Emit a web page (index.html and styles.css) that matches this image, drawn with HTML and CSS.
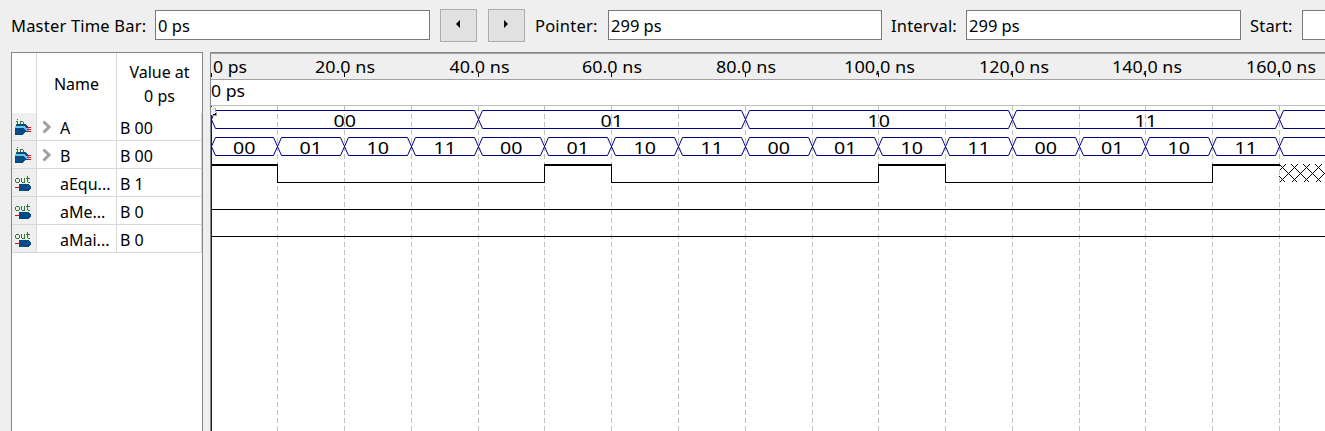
FILE: index.html
```
<!DOCTYPE html>
<html lang="en">
<head>
<meta charset="utf-8">
<title>Waveform Editor</title>
<link rel="stylesheet" href="styles.css">
</head>
<body>
<svg class="defs" width="0" height="0">
  <defs>
    <symbol id="pin-in" viewBox="0 0 18 18">
      <path class="pin-label" d="M2 1.500h1M1 3.500h2M2.500 3v3M1 6.500h3M5.500 3v4M6 3.500h2M8.500 4v3"/>
      <path class="pin-cable" d="M0 8h9l3 2h2v3h-3l-3-3H0z"/>
      <path class="pin-body" d="M2 6h8l4 3v1h-2L9 8H1zM0 10h8l4 3v1h-2l-3 3H0z"/>
      <path class="pin-wire" d="M13 9.500h3M12 11.500h4M12 13.500h4"/>
    </symbol>
    <symbol id="pin-out" viewBox="0 0 18 18">
      <path class="pin-label" d="M1 4.500h3M.5 5v3M4.500 5v3M1 8.500h3M6.500 4v4M7 8.500h3M9.500 4v5M12.500 2v6M11 4.500h4M13 8.500h2"/>
      <path class="pin-wire" d="M0 13.500h5"/>
      <path class="pin-body" d="M4 10h10l2 3v1l-2 3H4z"/>
    </symbol>
  </defs>
</svg>
<header class="toolbar">
  <label class="l-master">Master Time Bar:</label><div class="field">0 ps</div>
  <button class="step"><svg width="6" height="8"><path d="M5 0v8L1 4z"/></svg></button>
  <button class="step next"><svg width="6" height="8"><path d="M1 0v8l4-4z"/></svg></button>
  <label class="l-pointer">Pointer:</label><div class="field narrow">299 ps</div>
  <label class="l-interval">Interval:</label><div class="field">299 ps</div>
  <label class="l-start">Start:</label><div class="field last"></div>
</header>
<main class="editor">
  <section class="signals">
    <div class="row head"><div></div><div>Name</div><div>Value at<br>0 ps</div></div>
    <div class="row"><div class="pin"><svg><use href="#pin-in"/></svg></div><div class="name"><svg class="chev"><path d="M1.500 1.500l5.500 5.500-5.500 5.500"/></svg>A</div><div class="val">B 00</div></div>
    <div class="row"><div class="pin"><svg><use href="#pin-in"/></svg></div><div class="name"><svg class="chev"><path d="M1.500 1.500l5.500 5.500-5.500 5.500"/></svg>B</div><div class="val">B 00</div></div>
    <div class="row"><div class="pin"><svg><use href="#pin-out"/></svg></div><div class="name leaf">aEqu...</div><div class="val">B 1</div></div>
    <div class="row"><div class="pin"><svg><use href="#pin-out"/></svg></div><div class="name leaf">aMe...</div><div class="val">B 0</div></div>
    <div class="row"><div class="pin"><svg><use href="#pin-out"/></svg></div><div class="name leaf">aMai...</div><div class="val">B 0</div></div>
  </section>
  <section class="waves"><svg id="plot" width="1115" height="379" viewBox="210 52 1115 379"></svg></section>
</main>
<script src="wave.js"></script>
</body>
</html>
```
FILE: styles.css
```
body {
  margin: 0;
  width: 1325px;
  height: 431px;
  overflow: hidden;
  background: #efefef;
  color: #000;
  font: 17px/24px "Noto Sans", sans-serif;
}
.defs { position: absolute; }
.toolbar {
  display: flex;
  align-items: center;
  height: 52px;
  box-sizing: border-box;
  padding: 0 0 2px 11px;
  overflow: hidden;
}
.toolbar label { white-space: nowrap; flex: none; padding-top: 2px; letter-spacing: .2px; }
.toolbar .l-master { width: 144px; }
.toolbar .l-pointer { width: 73px; margin-left: 10px; }
.toolbar .l-interval { width: 75px; margin-left: 9px; }
.toolbar .l-start { width: 52px; margin-left: 9px; }
.toolbar label, .field { font-size: 16.5px; }
.field {
  flex: none;
  width: 275px;
  height: 30px;
  box-sizing: border-box;
  border: 1px solid #7a7a7a;
  background: #fff;
  padding: 3px 2px 0;
}
.field.narrow { width: 274px; }
.field.last { flex: 1; border-right: 0; }
.step {
  flex: none;
  display: flex;
  align-items: center;
  justify-content: center;
  width: 37px;
  height: 33px;
  margin: 0 0 0 10px;
  padding: 0 2px 2px 0;
  border: 1px solid #adadad;
  background: #e1e1e1;
}
.step.next { margin-left: 11px; }
.editor { display: flex; height: 379px; overflow: hidden; }
.signals {
  flex: none;
  box-sizing: border-box;
  width: 192px;
  height: 390px;
  margin: 0 7px 0 11px;
  border: 1px solid #828790;
  background: #fff;
  font-size: 16px;
}
.row {
  display: grid;
  grid-template-columns: 25px 80px 85px;
  height: 28px;
}
.row > div {
  box-sizing: border-box;
  border-right: 1px solid #d8d8d8;
  border-bottom: 1px solid #d8d8d8;
}
.row.head { height: 60px; }
.row.head > div {
  display: flex;
  align-items: center;
  justify-content: center;
  text-align: center;
  border-bottom: 0;
  padding-top: 1px;
}
.row.head > div:last-child { border-right: 0; }
.row > .pin { background: #efefef; padding: 5px 0 0 3px; }
.pin svg { display: block; width: 18px; height: 18px; shape-rendering: crispEdges; }
.row > .name { display: flex; align-items: center; padding: 2px 0 0 5px; }
.row > .name.leaf { padding-left: 23px; }
.row > .val { padding: 3px 0 0 3px; }
.chev { width: 10px; height: 14px; margin: -2px 8px 0 0; fill: none; stroke: #a0a0a0; stroke-width: 3; }
.pin-label { stroke: #2e7d32; fill: none; }
.pin-body { fill: #004a86; }
.pin-cable { fill: #6cc5e9; }
.pin-wire { stroke: #f00; }
.waves { flex: none; width: 1115px; height: 379px; background: #fff; }
#plot { display: block; font-size: 16.5px; }
.crisp { shape-rendering: crispEdges; }
.ruler { fill: #efefef; }
.frame { stroke: #828790; }
.rule { stroke: #a0a0a0; }
.soft { stroke: #c0c0c0; }
.grid { stroke: #c0c0c0; stroke-dasharray: 5 3; }
.bus { stroke: #000080; fill: none; }
.bit { stroke: #000; fill: none; }
.high { stroke: #000; stroke-width: 2; }
.cursor { stroke: #00f; }
.grip { fill: #efefef; }
```
FILE: wave.js
```
const plot = document.getElementById('plot');
const NS = 'http://www.w3.org/2000/svg';
function add(tag, cls, attrs, text) {
  const e = document.createElementNS(NS, tag);
  if (cls) e.setAttribute('class', cls);
  for (const k in attrs) e.setAttribute(k, attrs[k]);
  if (text) e.textContent = text;
  plot.appendChild(e);
}
const path = (cls, d) => add('path', cls, { d });
const label = (text, x, y, width) => add('text', '', { x, y, textLength: width, lengthAdjust: 'spacingAndGlyphs' }, text);
// x position of each 10 ns boundary
const ticks = [211, 277, 344, 411, 478, 544, 611, 678, 745, 812, 878, 945, 1012, 1079, 1145, 1212, 1279, 1346];

add('rect', 'ruler', { x: 210, y: 52, width: 1115, height: 27 });
path('frame crisp', 'M210 52.500H1325M210.500 52V431');
path('rule crisp', 'M211 53.500H1325M211 79.500H1325');
path('soft crisp', 'M211 105.500H1325');
ticks.slice(1).forEach(x => path('grid crisp', `M${x + .5} 106V431`));

const labels = [['0 ps', 213, 34], ['20.0 ns', 315, 60], ['40.0 ns', 449.500, 60], ['60.0 ns', 582, 60], ['80.0 ns', 716, 60],
  ['100,0 ns', 844, 71], ['120,0 ns', 979, 70], ['140,0 ns', 1112, 70], ['160,0 ns', 1246, 70]];
labels.forEach(([t, x, w], i) => {
  label(t, x, 73, w);
  path('bit crisp', `M${ticks[i * 2] + .5} 73V77`);
});
label('0 ps', 211, 97, 34);

function bus(x0, x1, top, value) {
  const a = x0 + .5, b = x1 + .5, m = top + 9, bot = top + 18;
  path('bus', `M${a} ${m}L${a + 4} ${top}H${b - 4}L${b} ${m}L${b - 4} ${bot}H${a + 4}Z`);
  if (value) label(value, (a + b) / 2 - 11.5, top + 16, 22.5);
}
['00', '01', '10', '11'].forEach((v, i) => bus(ticks[i * 4], ticks[i * 4 + 4], 110.5, v));
bus(1279, 1400, 110.5);
for (let i = 0; i < 16; i++) bus(ticks[i], ticks[i + 1], 137.5, ['00', '01', '10', '11'][i % 4]);
bus(1279, 1400, 137.5);

path('bit crisp', 'M277.500 164V182.500H544.500V164M611.500 164V182.500H878.500V164M945.500 164V182.500H1212.500V164M211 209.500H1325M211 236.500H1325');
path('high crisp', 'M211 165H278M544 165H612M878 165H946M1212 165H1280');
// undefined region hatch
path('bit crisp', 'M1279.500 176.500l6 6M1279.500 170.500l6-6');
for (let x = 1279.5; x < 1325; x += 12) path('bit crisp', `M${x} 164.500l18 18M${x} 182.500l18-18`);
path('cursor crisp', 'M211.500 106V431');
// drag handle of the time bar
add('rect', 'grip', { x: 211, y: 107, width: 5, height: 8 });
path('rule crisp', 'M215.500 108V112M212 115.500H216.500V112');
```
